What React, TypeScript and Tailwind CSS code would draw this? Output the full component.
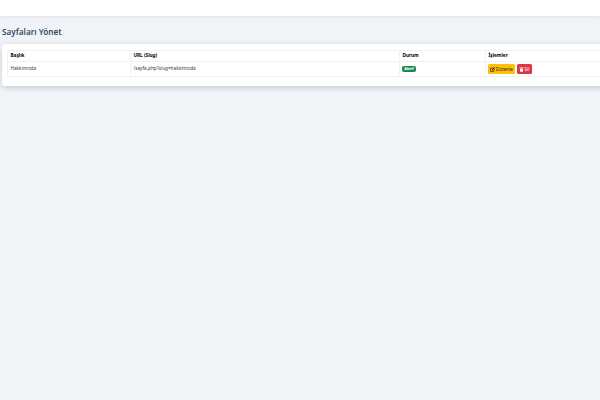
import { FC } from "react"

const EditIcon: FC = () => (
  <svg viewBox="0 0 10 10" className="h-[5px] w-[5px] shrink-0">
    <rect x="1" y="2" width="7" height="7" rx="1" fill="none" stroke="#212529" strokeWidth="1.4" />
    <path d="M3.5 6.5 L9 1" fill="none" stroke="#212529" strokeWidth="2" />
  </svg>
)

const TrashIcon: FC = () => (
  <svg viewBox="0 0 10 10" className="h-[5px] w-[5px] shrink-0">
    <rect x="1" y="1" width="8" height="1.5" fill="#fff" />
    <path d="M2 3.2 H8 V9.5 H2 Z" fill="#fff" />
  </svg>
)

const App: FC = () => {
  return (
    <div className="min-h-[400px] w-[600px] overflow-hidden bg-[#f0f4f8] font-['Noto_Sans',sans-serif]">
      <div className="h-4 w-full bg-white shadow-[0_1px_3px_rgba(0,0,0,0.08)]" />
      <div className="pl-[2px] pt-[9px]">
        <h1 className="h-[19px] text-[8.2px] leading-[13px] font-semibold text-[#34495e]">Sayfaları Yönet</h1>
        <div className="w-[620px] rounded-[3px] bg-white pt-[6px] pr-[5px] pb-[9px] pl-[5px] shadow-[0_2px_6px_rgba(0,0,0,0.16)]">
          <table className="w-full table-fixed border-collapse text-[4.7px] text-[#343a40]">
            <thead>
              <tr className="h-[11px] border border-[#f0f2f4] font-bold text-black">
                <th className="w-[123px] border-r border-[#f0f2f4] pl-[2.5px] text-left">Başlık</th>
                <th className="w-[269px] border-r border-[#f0f2f4] pl-[2.5px] text-left">URL (Slug)</th>
                <th className="w-[86px] border-r border-[#f0f2f4] pl-[2.5px] text-left">Durum</th>
                <th className="pl-[2.5px] text-left">İşlemler</th>
              </tr>
            </thead>
            <tbody>
              <tr className="h-[15px] border border-[#f0f2f4]">
                <td className="border-r border-[#f0f2f4] pl-[2.5px]">Hakkımızda</td>
                <td className="border-r border-[#f0f2f4] pl-[2.5px]">/sayfa.php?slug=hakkimizda</td>
                <td className="border-r border-[#f0f2f4] pl-[2px]">
                  <span className="inline-block w-[14px] rounded-[2px] bg-[#198754] text-center text-[4px] leading-[6px] font-bold text-white">Aktif</span>
                </td>
                <td className="pl-[2px]">
                  <div className="flex gap-[1.5px]">
                    <span className="flex h-[10px] w-[27px] items-center justify-center gap-[0.5px] rounded-[1.5px] bg-[#ffc107] text-[4.5px] text-[#212529]">
                      <EditIcon />
                      Düzenle
                    </span>
                    <span className="flex h-[10px] w-[15px] items-center justify-center gap-[1px] rounded-[1.5px] bg-[#dc3545] text-[4.5px] text-white">
                      <TrashIcon />
                      Sil
                    </span>
                  </div>
                </td>
              </tr>
            </tbody>
          </table>
        </div>
      </div>
    </div>
  )
}
export default App
